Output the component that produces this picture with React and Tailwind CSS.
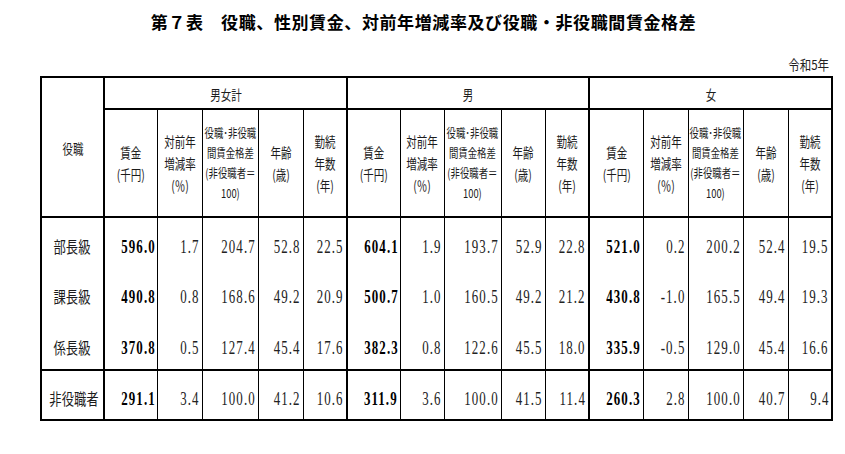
import React from "react";

const jp = "font-['Noto_Sans_CJK_JP',sans-serif]";
const num = "font-['Liberation_Serif','Noto_Sans_CJK_JP',serif]";

const colWidths = [63, 53, 45, 56, 45, 44, 53, 44, 57, 44, 44, 54, 45, 55, 45, 44];

const sections = ["男女計", "男", "女"];

const rows = [
  {
    label: "部長級",
    values: [
      ["596.0", "1.7", "204.7", "52.8", "22.5"],
      ["604.1", "1.9", "193.7", "52.9", "22.8"],
      ["521.0", "0.2", "200.2", "52.4", "19.5"],
    ],
  },
  {
    label: "課長級",
    values: [
      ["490.8", "0.8", "168.6", "49.2", "20.9"],
      ["500.7", "1.0", "160.5", "49.2", "21.2"],
      ["430.8", "-1.0", "165.5", "49.4", "19.3"],
    ],
  },
  {
    label: "係長級",
    values: [
      ["370.8", "0.5", "127.4", "45.4", "17.6"],
      ["382.3", "0.8", "122.6", "45.5", "18.0"],
      ["335.9", "-0.5", "129.0", "45.4", "16.6"],
    ],
  },
  {
    label: "非役職者",
    values: [
      ["291.1", "3.4", "100.0", "41.2", "10.6"],
      ["311.9", "3.6", "100.0", "41.5", "11.4"],
      ["260.3", "2.8", "100.0", "40.7", "9.4"],
    ],
  },
];

// header cells under each section
const subHeads = [
  { lines: ["賃金", "(千円)"], size: "text-[14px]" },
  { lines: ["対前年", "増減率", "(％)"], size: "text-[14px]" },
  { lines: ["役職･非役職", "間賃金格差", "(非役職者＝", "100)"], size: "text-[12.5px]", tight: true },
  { lines: ["年齢", "(歳)"], size: "text-[14px]" },
  { lines: ["勤続", "年数", "(年)"], size: "text-[14px]" },
];

const HeadCell = ({ head, last }) => (
  <th
    className={`border-black border-t-2 border-b-2 border-l ${
      last ? "border-r-2" : "border-r"
    } p-0 align-middle font-normal`}
  >
    <div className="flex justify-center">
      <div
        className={`shrink-0 origin-center scale-x-75 text-[#1c1c1c] ${head.size} ${
          head.tight ? "leading-[20px]" : "leading-[22px]"
        }`}
      >
        {head.lines.map((l) => (
          <div key={l} className="whitespace-nowrap text-center">
            {l}
          </div>
        ))}
      </div>
    </div>
  </th>
);

const NumCell = ({ value, bold, last, thickTop }) => (
  <td
    className={`border-black border-l ${last ? "border-r-2" : "border-r"} ${
      thickTop ? "border-t-2" : ""
    } p-0 pr-[2px] pt-[5px] text-right align-middle`}
  >
    <span
      className={`inline-block origin-right scale-x-[0.68] whitespace-nowrap text-[19px] tracking-[1.6px] leading-none ${num} ${
        bold ? "font-bold text-black" : "font-normal text-[#222]"
      }`}
    >
      {value}
    </span>
  </td>
);

export default function App() {
  return (
    <div className={`w-[845px] h-[454px] bg-white ${jp}`}>
      <div className="flex h-[44px] items-center justify-center pl-[2px]">
        <h1 className="text-[17px] font-bold tracking-[0.6px] text-black">
          第７表　役職、性別賃金、対前年増減率及び役職・非役職間賃金格差
        </h1>
      </div>

      <div className="flex h-[32px] items-end justify-end pb-[5px] pr-[16px]">
        <span className="inline-block origin-right scale-x-[0.85] text-[13.5px] leading-[14px] text-[#222]">
          令和5年
        </span>
      </div>

      <div className="pl-[40px]">
        <table className="w-[791px] table-fixed border-collapse border-2 border-black">
          <colgroup>
            {colWidths.map((w, i) => (
              <col key={i} style={{ width: w }} />
            ))}
          </colgroup>
          <thead>
            <tr className="h-[32px]">
              <th
                rowSpan={2}
                className="border-2 border-black p-0 align-middle font-normal"
              >
                <span className="inline-block scale-x-75 text-[14px] text-[#1c1c1c]">
                  役職
                </span>
              </th>
              {sections.map((s) => (
                <th
                  key={s}
                  colSpan={5}
                  className="border-t-2 border-r-2 border-b border-black p-0 align-middle font-normal"
                >
                  <span className="inline-block scale-x-75 text-[14px] text-[#1c1c1c]">
                    {s}
                  </span>
                </th>
              ))}
            </tr>
            <tr className="h-[108px]">
              {sections.map((s) =>
                subHeads.map((h, i) => (
                  <HeadCell key={s + i} head={h} last={i === 4} />
                ))
              )}
            </tr>
          </thead>
          <tbody>
            {rows.map((r, ri) => {
              const isLast = ri === rows.length - 1;
              return (
                <tr key={r.label} className={isLast ? "h-[50px]" : "h-[51px]"}>
                  <td
                    className={`border-l-2 border-r-2 border-black p-0 pt-[5px] text-center align-middle ${
                      isLast ? "border-t-2" : ""
                    }`}
                  >
                    <span className="inline-block scale-x-[0.77] whitespace-nowrap text-[16px] leading-none text-[#1c1c1c]">
                      {r.label}
                    </span>
                  </td>
                  {r.values.map((sec, si) =>
                    sec.map((v, vi) => (
                      <NumCell
                        key={si + "-" + vi}
                        value={v}
                        bold={vi === 0}
                        last={vi === 4}
                        thickTop={isLast}
                      />
                    ))
                  )}
                </tr>
              );
            })}
          </tbody>
        </table>
      </div>
    </div>
  );
}
